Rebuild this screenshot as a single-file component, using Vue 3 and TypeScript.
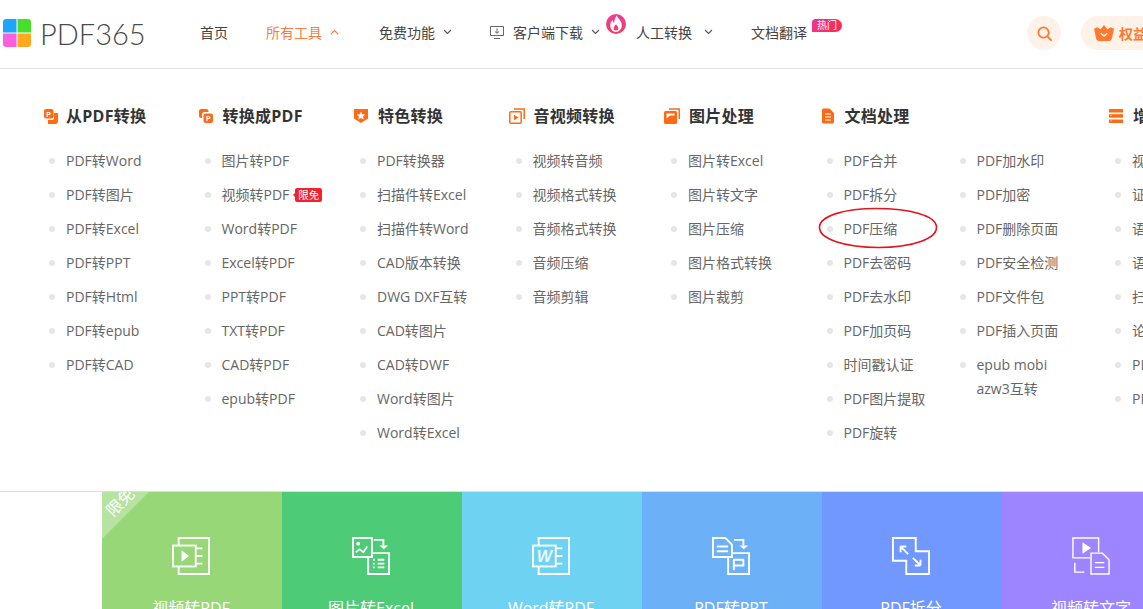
<script setup lang="ts">
interface LinkItem {
  label: string
  tag?: string
  circled?: boolean
}

interface ToolColumn {
  title: string
  icon: string
  wide?: boolean
  lists: LinkItem[][]
}

function links(...labels: string[]): LinkItem[] {
  return labels.map((label) => ({ label }))
}

const navItems = [
  { label: '首页' },
  { label: '所有工具', arrow: 'up', active: true },
  { label: '免费功能', arrow: 'down' },
  { label: '客户端下载', arrow: 'down', download: true },
  { label: '人工转换', arrow: 'down', fire: true },
  { label: '文档翻译', hot: true },
]

const convertList = links('图片转PDF', '视频转PDF', 'Word转PDF', 'Excel转PDF', 'PPT转PDF', 'TXT转PDF', 'CAD转PDF', 'epub转PDF')
convertList[1].tag = '限免'

const docList = links('PDF合并', 'PDF拆分', 'PDF压缩', 'PDF去密码', 'PDF去水印', 'PDF加页码', '时间戳认证', 'PDF图片提取', 'PDF旋转')
docList[2].circled = true

const columns: ToolColumn[] = [
  {
    title: '从PDF转换',
    icon: 'fromPdf',
    lists: [links('PDF转Word', 'PDF转图片', 'PDF转Excel', 'PDF转PPT', 'PDF转Html', 'PDF转epub', 'PDF转CAD')],
  },
  { title: '转换成PDF', icon: 'toPdf', lists: [convertList] },
  {
    title: '特色转换',
    icon: 'shield',
    lists: [links('PDF转换器', '扫描件转Excel', '扫描件转Word', 'CAD版本转换', 'DWG DXF互转', 'CAD转图片', 'CAD转DWF', 'Word转图片', 'Word转Excel')],
  },
  {
    title: '音视频转换',
    icon: 'video',
    lists: [links('视频转音频', '视频格式转换', '音频格式转换', '音频压缩', '音频剪辑')],
  },
  {
    title: '图片处理',
    icon: 'image',
    lists: [links('图片转Excel', '图片转文字', '图片压缩', '图片格式转换', '图片裁剪')],
  },
  {
    title: '文档处理',
    icon: 'doc',
    wide: true,
    lists: [docList, links('PDF加水印', 'PDF加密', 'PDF删除页面', 'PDF安全检测', 'PDF文件包', 'PDF插入页面', 'epub mobi azw3互转')],
  },
  {
    title: '增值服务',
    icon: 'bars',
    lists: [links('视频翻译', '证件照', '语音转文字', '语音合成', '扫描仪', '论文查重', 'PDF阅读器', 'PDF编辑器')],
  },
]

const cards = [
  { label: '视频转PDF', color: '#97d777', icon: 'video', ribbon: true },
  { label: '图片转Excel', color: '#4ecb77', icon: 'excel' },
  { label: 'Word转PDF', color: '#6ed2f3', icon: 'word' },
  { label: 'PDF转PPT', color: '#6cb0f7', icon: 'ppt' },
  { label: 'PDF拆分', color: '#7098ff', icon: 'split' },
  { label: '视频转文字', color: '#9c85ff', icon: 'text' },
]
</script>

<template>
  <div class="page">
    <header class="topbar">
      <div class="logo">
        <svg class="logo-mark" width="28" height="28" viewBox="0 0 28 28">
          <path d="M3 0h10.500v13.500H0V3a3 3 0 0 1 3-3z" fill="#1ca4ff" />
          <path d="M14.500 0H25a3 3 0 0 1 3 3v10.500H14.500z" fill="#4ade2c" />
          <path d="M0 14.500h13.500V28H3a3 3 0 0 1-3-3z" fill="#fb5fe0" />
          <path d="M14.500 14.500H28V25a3 3 0 0 1-3 3H14.500z" fill="#ffa91c" />
        </svg>
        <span class="logo-text">PDF365</span>
      </div>

      <nav class="nav">
        <div v-for="item in navItems" :key="item.label" class="nav-item" :class="{ active: item.active }">
          <svg v-if="item.download" class="dl-icon" width="14" height="14" viewBox="0 0 14 14" fill="none" stroke="#666" stroke-width="1">
            <path d="M.5 1.500h13v9H.5zM4 13.500h6M7 3.500v4.500M5 6.500 7 8.300 9 6.500" />
          </svg>
          <span class="nav-label">{{ item.label }}</span>
          <svg v-if="item.arrow" class="chevron" width="9" height="6" viewBox="0 0 9 6" fill="none" stroke="currentColor" stroke-width="1.100">
            <path v-if="item.arrow === 'up'" d="M1 5 4.500 1.500 8 5" />
            <path v-else d="M1 1 4.500 4.500 8 1" />
          </svg>
          <svg v-if="item.fire" class="fire" width="20" height="20" viewBox="0 0 20 20">
            <defs>
              <linearGradient id="fireFill" x1="0" y1="0" x2="0" y2="1">
                <stop offset="0" stop-color="#e8409f" />
                <stop offset="1" stop-color="#f53a5c" />
              </linearGradient>
            </defs>
            <circle cx="10" cy="10" r="10" fill="url(#fireFill)" />
            <path d="M10.800 1.500c.6 2.800 5 4.900 5 9.800 0 3.800-2.700 6.700-5.800 6.700s-5.800-2.900-5.800-6.500c0-2.400 1.100-4.200 2.500-5.500.1 1.400.6 2.400 1.400 3 .1-2.900 1.200-5.500 2.700-7.500zM10 10.200c-1.200 1.300-2.300 2.600-2.300 4.200 0 1.200.9 2 2.300 2s2.300-.8 2.300-2c0-1.600-1.200-2.900-2.300-4.200z" fill="#fff" fill-rule="evenodd" />
          </svg>
          <span v-if="item.hot" class="hot">热门</span>
        </div>
      </nav>

      <div class="actions">
        <button class="search-btn" type="button">
          <svg width="15" height="15" viewBox="0 0 16 16" fill="none" stroke="#ff7a2f" stroke-width="1.900">
            <circle cx="7" cy="7" r="5.500" />
            <path d="M11 11l4 4" stroke-linecap="round" />
          </svg>
        </button>
        <button class="rights-btn" type="button">
          <svg width="20" height="16" viewBox="0 0 20 16">
            <path d="M10 0l3.300 4.200L17 2.200l3 1.600-2 9.200c-.2 1.800-1.500 3-3.200 3H5.200c-1.700 0-3-1.200-3.200-3L0 3.800l3-1.600 3.700 2z" fill="#ff7a2f" />
            <path d="M6.800 8.200 10 11l3.200-2.800" fill="none" stroke="#fff" stroke-width="1.400" />
          </svg>
          <span>权益中心</span>
        </button>
      </div>
    </header>

    <section class="menu">
      <div v-for="col in columns" :key="col.title" class="col" :class="{ wide: col.wide }">
        <h3 class="col-title">
          <span class="col-icon">
            <svg v-if="col.icon === 'fromPdf'" width="16" height="16" viewBox="0 0 16 16">
              <path d="M11 5h4v8a3 3 0 0 1-3 3H5v-4h4a2 2 0 0 0 2-2z" fill="#ff6a13" />
              <rect x="1" y="1" width="9.500" height="9.500" rx="2" fill="#ff6a13" />
              <text x="3.300" y="8.500" class="icon-letter">P</text>
            </svg>
            <svg v-else-if="col.icon === 'toPdf'" width="16" height="16" viewBox="0 0 16 16">
              <path d="M3 1h5.500a2 2 0 0 1 2 2v1H6.500A2.500 2.500 0 0 0 4 6.500V10H3a2 2 0 0 1-2-2V3a2 2 0 0 1 2-2z" fill="#ff6a13" />
              <rect x="5.500" y="5.500" width="9.500" height="9.500" rx="2" fill="#ff6a13" />
              <text x="8" y="13" class="icon-letter">P</text>
            </svg>
            <svg v-else-if="col.icon === 'shield'" width="16" height="16" viewBox="0 0 16 16">
              <path d="M1 1h14v9.500L8 15l-7-4.500z" fill="#ff6a13" />
              <path d="M8 3.500l1.300 2.700 2.900.4-2.100 2 .5 2.900L8 10.100l-2.600 1.400.5-2.900-2.100-2 2.900-.4z" fill="#fff" />
            </svg>
            <svg v-else-if="col.icon === 'video'" width="16" height="16" viewBox="0 0 16 16" fill="none" stroke="#ff6a13" stroke-width="1.500">
              <path d="M5 1h10.200v10" />
              <rect x=".8" y="3.800" width="11.400" height="11.400" rx="1" />
              <path d="M5 6.800 9.500 9.500 5 12.200z" fill="#ff6a13" stroke="none" />
            </svg>
            <svg v-else-if="col.icon === 'image'" width="16" height="16" viewBox="0 0 16 16">
              <path d="M5 1h10.200v10" fill="none" stroke="#ff6a13" stroke-width="1.500" />
              <rect y="3" width="13" height="13" rx="1.500" fill="#ff6a13" />
              <path d="M2.500 10.500 6 7.500h4.500v-2h-8z" fill="#fff" />
            </svg>
            <svg v-else-if="col.icon === 'doc'" width="16" height="16" viewBox="0 0 16 16">
              <path d="M3 .5h6.500L14 5v9a1.500 1.500 0 0 1-1.500 1.500h-9A1.500 1.500 0 0 1 2 14V2a1.500 1.500 0 0 1 1-1.500z" fill="#ff6a13" />
              <path d="M5 6h6M5 9h6M5 12h6" stroke="#fff" stroke-width="1" />
            </svg>
            <svg v-else width="16" height="16" viewBox="0 0 16 16" fill="#ff6a13">
              <rect x="1" y="1" width="14" height="3.500" />
              <rect x="1" y="6.200" width="14" height="3.500" />
              <rect x="1" y="11.500" width="14" height="3.500" />
              <path d="M2.500 7.500h1M2.500 12.800h1" stroke="#fff" stroke-width=".8" />
            </svg>
          </span>
          {{ col.title }}
        </h3>
        <div class="col-lists">
          <ul v-for="(list, index) in col.lists" :key="index" class="link-list">
            <li v-for="link in list" :key="link.label" class="link">
              <i class="dot"></i>
              <span class="link-label">{{ link.label }}</span>
              <span v-if="link.tag" class="free-tag">{{ link.tag }}</span>
              <svg v-if="link.circled" class="circled" width="120" height="42" viewBox="0 0 120 42" fill="none">
                <path d="M1.500 20C2 9 26 1.500 58 1.500c34 0 60 7 60.500 18.500.5 12-25 20.500-58 20.500C27 40.500 1 32 1.500 20z" stroke="#e3141f" stroke-width="1.600" />
              </svg>
            </li>
          </ul>
        </div>
      </div>
    </section>

    <section class="cards">
      <div v-for="card in cards" :key="card.label" class="card" :style="{ background: card.color }">
        <template v-if="card.ribbon">
          <span class="ribbon"></span>
          <span class="ribbon-text">限免</span>
        </template>
        <svg class="card-icon" width="38" height="38" viewBox="0 0 40 40" fill="none" stroke="#fff" stroke-width="2">
          <g v-if="card.icon === 'video' || card.icon === 'word'">
            <path d="M7 9V1h32v38H7v-8M25 12h7M25 20h7M25 28h7" />
            <rect x="1" y="9" width="24" height="22" />
            <path v-if="card.icon === 'video'" d="M10 14l8 6-8 6z" fill="#fff" stroke="none" />
            <text v-else x="13" y="26" text-anchor="middle" class="card-letter word-letter">W</text>
          </g>
          <g v-else-if="card.icon === 'excel'">
            <rect x="1" y="1" width="20" height="20" />
            <circle cx="6.500" cy="7" r="2" fill="#fff" stroke="none" />
            <path d="M4 16l4-3 4 3 4-6" stroke-width="1.800" />
            <path d="M23 3h10v6" />
            <path d="M29 9h9l-4.500 4z" fill="#fff" stroke="none" />
            <path d="M21 17h18v22H17V21" />
            <path d="M22 24h2M22 28h2M22 32h2M27 24h7M27 28h7M27 32h7" />
          </g>
          <g v-else-if="card.icon === 'ppt'">
            <path d="M1 1h13l7 7v13H1zM5 10h12M5 15h12" />
            <path d="M23 3h10v6" />
            <path d="M29 9h9l-4.500 4z" fill="#fff" stroke="none" />
            <path d="M21 17h18v22H17V21" />
            <path d="M23 35V24h10v6H23" />
          </g>
          <g v-else-if="card.icon === 'split'">
            <path d="M1 1h24v14h14v24H15V25H1z" />
            <path d="M9 10h6M9 10v6M9 10l8 8M30 30h-6M30 30v-6M30 30l-8-8" />
          </g>
          <g v-else stroke-width="1.500">
            <path d="M19 22H1V1h27v15" />
            <path d="M11 5.500l9 6-9 6z" fill="#fff" stroke="none" />
            <path d="M20 17h12l7 7v15H20zM24 27h10M24 32h10M3 27v10h10" />
          </g>
        </svg>
        <span class="card-label">{{ card.label }}</span>
      </div>
    </section>
  </div>
</template>

<style>
html,
body {
  margin: 0;
  background: #fff;
}
</style>

<style scoped>
.page {
  width: 1143px;
  height: 609px;
  overflow: hidden;
  font-family: "Open Sans", "Noto Sans CJK SC", sans-serif;
  color: #333;
}
.topbar {
  display: flex;
  align-items: center;
  height: 66px;
  padding-bottom: 2px;
  border-bottom: 1px solid #e0e0e0;
  white-space: nowrap;
}
.logo {
  display: flex;
  flex: none;
  align-items: center;
  gap: 9px;
  width: 200px;
  padding-left: 3px;
  box-sizing: border-box;
}
.logo-mark {
  flex: none;
}
.logo-text {
  font-family: Lato, sans-serif;
  font-size: 29px;
  font-weight: 300;
  color: #4a4a4a;
  line-height: 1;
}
.nav {
  display: flex;
  flex: none;
  align-items: center;
  margin-bottom: 2px;
}
.nav-item {
  display: flex;
  align-items: center;
  position: relative;
  margin-right: 38px;
  font-size: 14px;
  color: #444;
}
.nav-item.active {
  color: #ff7a3d;
  margin-right: 40px;
}
.chevron {
  margin-left: 8px;
  color: #555;
}
.active .chevron {
  color: #ff7a3d;
}
.nav-item:nth-child(4) {
  margin-right: 36px;
}
.nav-item:nth-child(5) .chevron {
  margin-left: 12px;
}
.dl-icon {
  margin-right: 9px;
}
.fire {
  position: absolute;
  left: -30px;
  top: -8px;
}
.hot {
  position: absolute;
  left: 61px;
  top: -3px;
  width: 30px;
  height: 13px;
  border-radius: 4px 7px 7px 0;
  background: linear-gradient(90deg, #f0348c, #ff2a4d);
  color: #fff;
  font-size: 10px;
  line-height: 13px;
  text-align: center;
}
.actions {
  display: flex;
  align-items: center;
  gap: 20px;
  margin-left: 182px;
  flex: none;
}
.search-btn,
.rights-btn {
  display: flex;
  align-items: center;
  height: 34px;
  border: 0;
  padding: 0;
  background: #fff2e9;
  border-radius: 17px;
  font-family: inherit;
}
.search-btn {
  width: 34px;
  justify-content: center;
}
.rights-btn {
  flex: none;
  width: 110px;
  padding-left: 13px;
  gap: 5px;
  color: #ff7a2f;
  font-size: 14px;
  font-weight: 700;
}
.menu {
  display: flex;
  height: 423px;
  box-sizing: border-box;
  padding: 36px 0 0 43px;
  border-bottom: 1px solid #ddd;
}
.col {
  flex: none;
  width: 155.500px;
}
.col.wide {
  width: 288.500px;
}
.col-title {
  display: flex;
  align-items: center;
  height: 22px;
  margin: 0 0 17px -1px;
  font-size: 16px;
  font-weight: 700;
  line-height: 22px;
  letter-spacing: 0.25px;
  color: #333;
  white-space: nowrap;
}
.col:first-child .col-title {
  margin-left: 0;
}
.col-icon {
  display: flex;
  flex: none;
  width: 25px;
}
.col:first-child .col-icon {
  width: 23px;
}
.icon-letter {
  font-family: "Liberation Sans", sans-serif;
  font-size: 7px;
  font-weight: 700;
  fill: #fff;
}
.col-lists {
  display: flex;
}
.link-list {
  margin: 0;
  padding: 0;
  list-style: none;
}
.wide .link-list {
  width: 133px;
  flex: none;
}
.wide .link-list + .link-list {
  width: 112px;
}
.link {
  display: flex;
  align-items: flex-start;
  position: relative;
  padding: 5px 0;
  font-size: 14px;
  line-height: 24px;
  color: #666;
  white-space: nowrap;
}
.wide .link-list + .link-list .link {
  white-space: normal;
}
.dot {
  flex: none;
  width: 6px;
  height: 6px;
  margin: 9px 11px 0 6px;
  border-radius: 50%;
  background: #e6e6e6;
}
.free-tag {
  position: relative;
  flex: none;
  margin: 5px 0 0 6px;
  padding: 0 3px;
  height: 14px;
  border-radius: 2px;
  background: #f5222d;
  color: #fff;
  font-size: 10.500px;
  line-height: 14px;
}
.free-tag::before {
  content: "";
  position: absolute;
  left: -2px;
  top: 5px;
  border-style: solid;
  border-width: 2px 2px 2px 0;
  border-color: transparent #f5222d transparent transparent;
}
.circled {
  position: absolute;
  left: -3px;
  top: -5px;
  pointer-events: none;
}
.cards {
  display: flex;
  padding-left: 102px;
}
.card {
  position: relative;
  flex: none;
  display: flex;
  flex-direction: column;
  align-items: center;
  width: 180px;
  height: 190px;
  padding: 45px 2px 0 0;
  box-sizing: border-box;
  overflow: hidden;
  color: #fff;
}
.card-icon {
  flex: none;
}
.card-label {
  margin-top: 21px;
  font-size: 16px;
  line-height: 24px;
  white-space: nowrap;
}
.card-letter {
  font-family: "Liberation Sans", sans-serif;
  stroke: none;
  fill: #fff;
}
.word-letter {
  font-size: 17px;
  font-weight: 700;
  font-style: italic;
  opacity: 0.85;
}
.ribbon {
  position: absolute;
  left: 0;
  top: 0;
  width: 47px;
  height: 47px;
  background: rgba(255, 255, 255, 0.3);
  clip-path: polygon(0 0, 100% 0, 0 100%);
}
.ribbon-text {
  position: absolute;
  left: 2px;
  top: 2px;
  font-size: 16px;
  line-height: 16px;
  transform: rotate(-45deg);
}
</style>
